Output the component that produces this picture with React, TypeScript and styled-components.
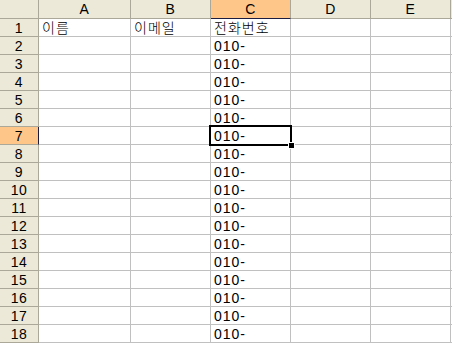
import React from "react";
import styled, { createGlobalStyle, css } from "styled-components";

const Global = createGlobalStyle`
  html, body { margin: 0; padding: 0; background: #ffffff; overflow: hidden; }
  #root { width: 452px; height: 344px; }
`;

const Sheet = styled.div`
  display: grid;
  grid-template-columns: 39px 92px 80px 80px 80px 80px 1fr;
  grid-template-rows: 19px repeat(18, 18px);
  width: 452px;
  height: 344px;
  font-family: "Liberation Sans", "Noto Sans CJK KR", sans-serif;
  font-size: 14px;
  color: #000;
  background: #fff;
`;

const HeadCell = styled.div<{ $active?: boolean; $side?: "col" | "row" | "corner" }>`
  box-sizing: border-box;
  background: ${(p) => (p.$active ? "#ffc68a" : "#ece9d8")};
  border-right: 1px solid #aca899;
  border-bottom: 1px solid #aca899;
  display: flex;
  align-items: center;
  justify-content: center;
  line-height: 17px;
  padding-top: 1px;
  letter-spacing: 0.5px;
  white-space: nowrap;
  overflow: hidden;
  ${(p) =>
    p.$active &&
    p.$side === "row" &&
    css`
      border-right-color: #1c1c40;
    `}
  ${(p) =>
    p.$active &&
    p.$side === "col" &&
    css`
      border-bottom-color: #1c1c40;
    `}
`;

const Cell = styled.div<{ $selected?: boolean }>`
  box-sizing: border-box;
  position: relative;
  border-right: 1px solid #c0c0c0;
  border-bottom: 1px solid #c0c0c0;
  padding-left: 3px;
  padding-top: 1px;
  line-height: 17px;
  letter-spacing: 1px;
  font-weight: 300;
  white-space: nowrap;
  overflow: ${(p) => (p.$selected ? "visible" : "hidden")};
  z-index: ${(p) => (p.$selected ? 2 : 0)};
`;

const Selection = styled.div`
  position: absolute;
  left: -2px;
  top: -2px;
  right: -2px;
  bottom: -2px;
  border: 2px solid #000;
  box-sizing: border-box;
  pointer-events: none;
`;

const FillHandle = styled.div`
  position: absolute;
  right: -4px;
  bottom: -4px;
  width: 5px;
  height: 5px;
  background: #000;
  box-shadow: 0 0 0 1px #fff;
`;

const cols = ["A", "B", "C", "D", "E", ""];
const activeCol = 2;
const activeRow = 7;

const cellText = (row: number, col: number): string => {
  if (row === 1) {
    if (col === 0) return "이름";
    if (col === 1) return "이메일";
    if (col === 2) return "전화번호";
    return "";
  }
  if (col === 2) return "010-";
  return "";
};

export default function App() {
  const rows = Array.from({ length: 18 }, (_, i) => i + 1);
  return (
    <>
      <Global />
      <Sheet>
        <HeadCell $side="corner" />
        {cols.map((c, i) => (
          <HeadCell key={`h${i}`} $side="col" $active={i === activeCol}>
            {c}
          </HeadCell>
        ))}
        {rows.map((r) => (
          <React.Fragment key={r}>
            <HeadCell $side="row" $active={r === activeRow}>
              {r}
            </HeadCell>
            {cols.map((_, ci) => {
              const selected = r === activeRow && ci === activeCol;
              return (
                <Cell key={ci} $selected={selected}>
                  {cellText(r, ci)}
                  {selected && (
                    <Selection>
                      <FillHandle />
                    </Selection>
                  )}
                </Cell>
              );
            })}
          </React.Fragment>
        ))}
      </Sheet>
    </>
  );
}
